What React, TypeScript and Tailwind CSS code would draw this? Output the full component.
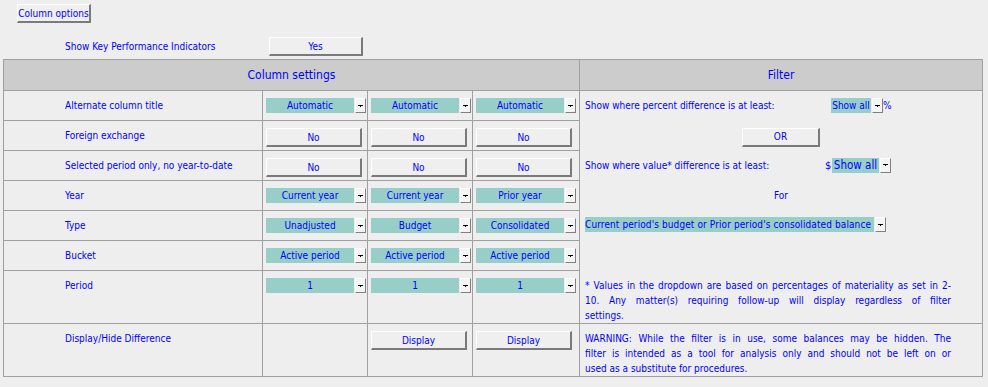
import React from "react";

function Arrow() {
  return (
    <div className="ml-px flex h-[15px] w-[11px] shrink-0 items-center justify-center border-t border-l border-t-white border-l-white border-r border-b border-r-[#808080] border-b-[#808080] bg-[#f4f4f4]">
      <svg width="5" height="3" viewBox="0 0 5 3" className="mt-px block">
        <rect x="0" y="0" width="5" height="1" fill="#000" />
        <rect x="2" y="1" width="1" height="1" fill="#000" />
      </svg>
    </div>
  );
}

function Drop({ label }: { label: string }) {
  return (
    <div className="flex items-start pl-[3px] pt-[7px]">
      <div className="h-[15px] w-[88px] whitespace-nowrap bg-[#98cec8] text-center leading-[15px]">{label}</div>
      <Arrow />
    </div>
  );
}

function Btn({ label, w }: { label: string; w: string }) {
  return (
    <button
      className={`${w} h-[19px] whitespace-nowrap border-t border-l border-t-white border-l-white border-r-2 border-b-2 border-r-[#7a7a7a] border-b-[#7a7a7a] bg-[#efefef] text-center leading-[15px] text-[#0000ff]`}
    >
      {label}
    </button>
  );
}

function BtnCell({ label }: { label: string }) {
  return (
    <div className="flex items-start bg-[#eeeeee] pl-[3px] pt-[7px]">
      <Btn label={label} w="w-[96px]" />
    </div>
  );
}

function Label({ text }: { text: string }) {
  return <div className="whitespace-nowrap bg-[#eeeeee] pl-[61px] pt-[8px] leading-[13px]">{text}</div>;
}

function DropCell({ label }: { label: string }) {
  return (
    <div className="bg-[#eeeeee]">
      <Drop label={label} />
    </div>
  );
}

const rows: { label: string; kind: "drop" | "btn"; vals: string[] }[] = [
  { label: "Alternate column title", kind: "drop", vals: ["Automatic", "Automatic", "Automatic"] },
  { label: "Foreign exchange", kind: "btn", vals: ["No", "No", "No"] },
  { label: "Selected period only, no year-to-date", kind: "btn", vals: ["No", "No", "No"] },
  { label: "Year", kind: "drop", vals: ["Current year", "Current year", "Prior year"] },
  { label: "Type", kind: "drop", vals: ["Unadjusted", "Budget", "Consolidated"] },
  { label: "Bucket", kind: "drop", vals: ["Active period", "Active period", "Active period"] },
  { label: "Period", kind: "drop", vals: ["1", "1", "1"] },
];

export default function App() {
  return (
    <div className="h-[387px] w-[988px] overflow-hidden bg-[#eeeeee] font-['DejaVu_Sans_Condensed','DejaVu_Sans',sans-serif] text-[10px] text-[#0000ff]">
      <div className="pl-[17px] pt-[4px]">
        <Btn label="Column options" w="w-[74px]" />
      </div>
      <div className="mt-[14px] flex items-center pl-[65px]">
        <div className="w-[204px] whitespace-nowrap leading-[13px]">Show Key Performance Indicators</div>
        <Btn label="Yes" w="w-[94px]" />
      </div>
      <div className="ml-[3px] mt-[3px] grid w-fit grid-cols-[258px_104px_104px_106px_402px] grid-rows-[30px_29px_29px_29px_29px_29px_29px_52px_52px] gap-px bg-[#a0a0a0] p-px">
        <div className="col-span-4 flex items-center justify-center bg-[#cccccc] text-[12px]">Column settings</div>
        <div className="flex items-center justify-center bg-[#cccccc] text-[12px]">Filter</div>

        {rows.map((r, i) => (
          <React.Fragment key={i}>
            <Label text={r.label} />
            {r.vals.map((v, j) =>
              r.kind === "drop" ? <DropCell key={j} label={v} /> : <BtnCell key={j} label={v} />
            )}
          </React.Fragment>
        ))}

        <div className="col-start-5 row-span-7 row-start-2 flex flex-col bg-[#eeeeee]">
          <div className="flex h-[30px] items-start pl-[5px] pt-[7px]">
            <div className="flex items-center">
              <div className="w-[246px] whitespace-nowrap leading-[15px]">Show where percent difference is at least:</div>
              <div className="h-[15px] w-[40px] whitespace-nowrap bg-[#98cec8] text-center leading-[15px]">Show all</div>
              <Arrow />
              <span className="leading-[15px]">%</span>
            </div>
          </div>
          <div className="flex h-[30px] justify-center pt-[7px]">
            <Btn label="OR" w="w-[78px]" />
          </div>
          <div className="flex h-[30px] items-start pl-[5px] pt-[7px]">
            <div className="flex items-center">
              <div className="w-[240px] whitespace-nowrap leading-[15px]">Show where value* difference is at least:</div>
              <span className="w-[7px] text-[11px] leading-[15px]">$</span>
              <div className="h-[15px] w-[47px] whitespace-nowrap bg-[#98cec8] text-center text-[11.5px] leading-[15px]">Show all</div>
              <Arrow />
            </div>
          </div>
          <div className="flex h-[30px] justify-center pt-[8px] leading-[13px]">For</div>
          <div className="flex h-[30px] items-start pl-[5px] pt-[7px]">
            <div className="h-[15px] w-[289px] overflow-hidden whitespace-nowrap bg-[#98cec8] leading-[15px] tracking-[0.1px]">
              Current period's budget or Prior period's consolidated balance
            </div>
            <Arrow />
          </div>
          <div className="h-[30px]" />
          <div className="w-[371px] pl-[5px] pt-[8px] leading-[15px]">
            <div className="whitespace-nowrap text-justify [text-align-last:justify]">
              * Values in the dropdown are based on percentages of materiality as set in 2-
            </div>
            <div className="whitespace-nowrap text-justify [text-align-last:justify]">
              10. Any matter(s) requiring follow-up will display regardless of filter
            </div>
            <div>settings.</div>
          </div>
        </div>

        <Label text="Display/Hide Difference" />
        <div className="bg-[#eeeeee]" />
        <BtnCell label="Display" />
        <BtnCell label="Display" />
        <div className="bg-[#eeeeee] pl-[5px] pt-[7px] leading-[15px]">
          <div className="w-[366px]">
            <div className="whitespace-nowrap text-justify [text-align-last:justify]">
              WARNING: While the filter is in use, some balances may be hidden. The
            </div>
            <div className="whitespace-nowrap text-justify [text-align-last:justify]">
              filter is intended as a tool for analysis only and should not be left on or
            </div>
            <div>used as a substitute for procedures.</div>
          </div>
        </div>
      </div>
    </div>
  );
}
